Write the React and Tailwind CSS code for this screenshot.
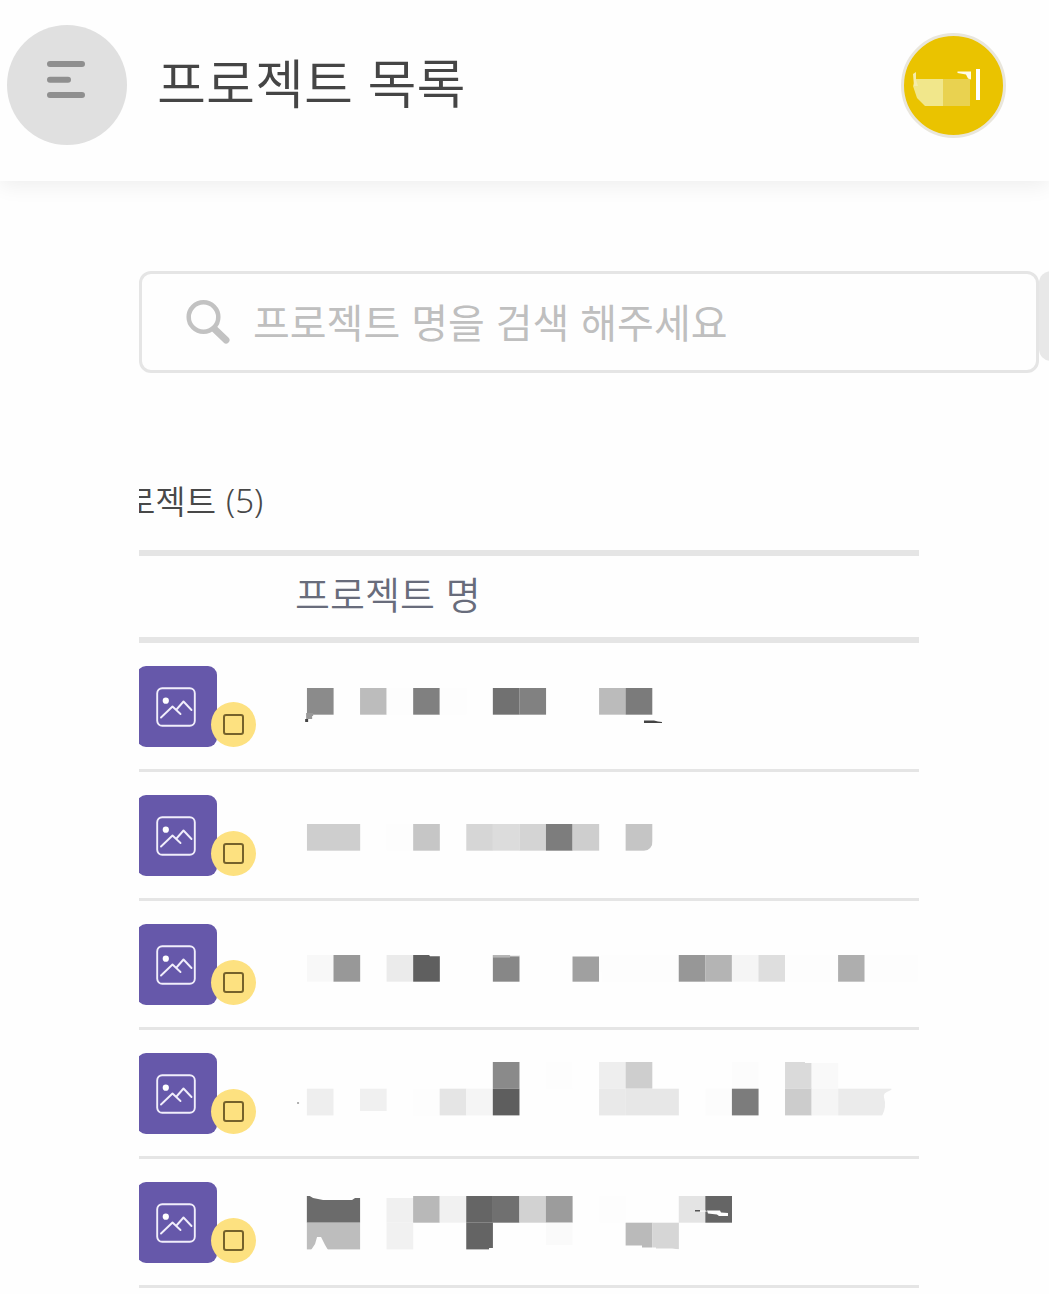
// One mosaic cell is 26.57 units wide; [column, row, colour, columns spanned]
const CELL = 26.57;

const projects = [
    {
        id: 1,
        top: 45,
        rows: 1,
        cells: [
            [0, 0, '#8b8b8b'],
            [2, 0, '#bcbcbc'],
            [3, 0, '#fdfdfd'],
            [4, 0, '#808080'],
            [5, 0, '#fdfdfd'],
            [7, 0, '#717171'],
            [8, 0, '#818181'],
            [11, 0, '#bbbbbb'],
            [12, 0, '#7b7b7b'],
        ],
        details: (
            <>
                <path d="M-1 25h7v3h-1v3h-6z" fill="#989898" />
                <path d="M-2 31h3v3h-3z" fill="#444" />
                <path d="M337 32.4h10l4 1 4 .5v1h-18z" fill="#444" />
            </>
        ),
    },
    {
        id: 2,
        top: 181,
        rows: 1,
        cells: [
            [0, 0, '#cecece', 2],
            [3, 0, '#fdfdfd'],
            [4, 0, '#c6c6c6'],
            [6, 0, '#d6d6d6'],
            [7, 0, '#dcdcdc'],
            [8, 0, '#d4d4d4'],
            [9, 0, '#7d7d7d'],
            [10, 0, '#cecece'],
            [12, 0, '#c5c5c5'],
        ],
        details: <path d="M346 17q-1 9-9 10h9z" fill="#fefefe" />,
    },
    {
        id: 3,
        top: 312,
        rows: 1,
        cells: [
            [0, 0, '#f8f8f8'],
            [1, 0, '#989898'],
            [3, 0, '#ebebeb'],
            [4, 0, '#5f5f5f'],
            [7, 0, '#878787'],
            [10, 0, '#a0a0a0'],
            [11, 0, '#fdfdfd', 3],
            [14, 0, '#979797'],
            [15, 0, '#b4b4b4'],
            [16, 0, '#f5f5f5'],
            [17, 0, '#dedede'],
            [18, 0, '#fdfdfd', 2],
            [20, 0, '#aeaeae'],
            [21, 0, '#fdfdfd', 2],
        ],
        details: (
            <>
                <path d="M122 0h11v1.2h-10z" fill="#fefefe" />
                <path d="M186 0h17v2.6h-17z" fill="#b5b5b5" />
                <path d="M203 0h10v1.4h-10z" fill="#ededed" />
                <path d="M265 0h29v1.6h-29zM293 17h2v10h-2z" fill="#fefefe" />
            </>
        ),
    },
    {
        id: 4,
        top: 419,
        rows: 2,
        cells: [
            [7, 0, '#8a8a8a'],
            [9, 0, '#fdfdfd'],
            [11, 0, '#eeeeee'],
            [12, 0, '#cecece'],
            [16, 0, '#fcfcfc'],
            [18, 0, '#dadada'],
            [19, 0, '#f9f9f9'],
            [0, 1, '#eeeeee'],
            [2, 1, '#f0f0f0'],
            [4, 1, '#fdfdfd'],
            [5, 1, '#e5e5e5'],
            [6, 1, '#f5f5f5'],
            [7, 1, '#5e5e5e'],
            [11, 1, '#e9e9e9'],
            [12, 1, '#e7e7e7', 2],
            [15, 1, '#fcfcfc'],
            [16, 1, '#7c7c7c'],
            [18, 1, '#cccccc'],
            [19, 1, '#f5f5f5'],
            [20, 1, '#ebebeb', 2],
        ],
        details: (
            <>
                <path d="M53 49h27v6H53z" fill="#fefefe" />
                <path d="M-10 40h2v2h-2z" fill="#b0b0b0" />
                <path d="M582 29q-6 2-5 6 3 10-2 19h11V27z" fill="#fefefe" />
                <path d="M498 -1h35v2h-35z" fill="#fefefe" />
            </>
        ),
    },
    {
        id: 5,
        top: 553,
        rows: 2,
        cells: [
            [0, 0, '#6b6b6b', 2],
            [3, 0, '#f0f0f0'],
            [4, 0, '#b8b8b8'],
            [5, 0, '#f1f1f1'],
            [6, 0, '#656565'],
            [7, 0, '#707070'],
            [8, 0, '#d2d2d2'],
            [9, 0, '#9c9c9c'],
            [11, 0, '#fdfdfd'],
            [14, 0, '#e4e4e4'],
            [15, 0, '#656565'],
            [0, 1, '#bdbdbd', 2],
            [3, 1, '#f1f1f1'],
            [6, 1, '#646464'],
            [9, 1, '#fafafa'],
            [12, 1, '#bababa'],
            [13, 1, '#d6d6d6'],
        ],
        details: (
            <>
                <path d="M1 -1l5 3 10 2h29l3-2h6v-4z" fill="#fefefe" />
                <path d="M4 54l4-6 2-7h4l4 8 3 5z" fill="#fefefe" />
                <path d="M78 0h28v2H78zM182 52h5v3h-5z" fill="#fefefe" />
                <path d="M318 49.5h17v2h14v1h16l8 1v2h-55z" fill="#fefefe" />
                <path d="M238 49h31v5h-31z" fill="#fefefe" />
                <path d="M400 14.5h13l1 2 7 .5v3h-9l-2-1.500-9-1z" fill="#fefefe" />
                <path d="M388 14h5v1.5h-5z" fill="#555" />
                <path d="M393 14.5h6l1 1-7 .5z" fill="#f8f8f8" />
            </>
        ),
    },
];

function RedactedName({ project }) {
    return (
        <svg
            className="block shrink-0 overflow-visible"
            width="612"
            height={project.rows * 26.7}
            viewBox={`0 0 612 ${project.rows * 26.7}`}
        >
            {project.cells.map(([col, row, fill, span = 1], i) => (
                <rect
                    key={i}
                    x={col * CELL - 0.2}
                    y={row * 26.7}
                    width={span * CELL + 0.1}
                    height="26.7"
                    fill={fill}
                />
            ))}
            {project.details}
        </svg>
    );
}

function ImageIcon() {
    return (
        <svg
            className="relative -left-px"
            width="40"
            height="40"
            viewBox="0 0 40 40"
            fill="none"
            stroke="#f1eefb"
            strokeWidth="1.9"
        >
            <rect x="1.2" y="1.2" width="37.6" height="37.6" rx="5" />
            <circle cx="9.8" cy="13.7" r="3.1" fill="#fff" stroke="none" />
            <path d="M5 30.5L16.5 19.5l8 7.5M20.5 22.5l7-8 8 8.5" strokeLinecap="round" strokeLinejoin="round" />
        </svg>
    );
}

function Header() {
    return (
        <header className="flex h-[181px] items-start bg-[#fefefe] pl-[7px] pr-[43px] shadow-[0_4px_20px_rgba(0,0,0,0.07)]">
            <button type="button" className="mt-[25px] size-[120px] shrink-0 rounded-full bg-[#e0e0e0]">
                <svg width="120" height="120" viewBox="0 0 120 120" stroke="#8f8f8f" strokeWidth="6" strokeLinecap="round">
                    <path d="M43 39h32M43 54.7h18M43 70h32" />
                </svg>
            </button>
            <h1 className="ml-[30px] mt-[41px] whitespace-nowrap text-[53.3px] font-[350] leading-[80px] text-[#454545] [word-spacing:2.5px]">
                프로젝트 목록
            </h1>
            <div className="ml-auto mt-[33px] size-[105px] rounded-full border-[3px] border-[#e9e6dc] bg-[#eac300]">
                <svg className="block" width="99" height="99" viewBox="904 36 99 99">
                    <path d="M915.5 79H944v27h-19l-8-8-4-12z" fill="#f1e78b" />
                    <path d="M943 79h27v27h-27z" fill="#e9d250" />
                    <path d="M913 74l3-2v8l2 6h-4z" fill="#f5ecab" />
                    <path d="M957.5 71.5h13.5v8l-3-1-2-4-8.5-1.5z" fill="#fffce8" />
                    <path d="M976 69h4v31h-4z" fill="#fff" />
                </svg>
            </div>
        </header>
    );
}

export default function App() {
    return (
        <div className="h-[1294px] w-[1049px] overflow-hidden bg-[#fefefe] font-['Noto_Sans_CJK_KR',sans-serif]">
            <Header />
            <main className="pl-[139px] pt-[90px]">
                <div className="flex items-start">
                    <div className="flex h-[102px] w-[900px] shrink-0 items-center rounded-[12px] border-[3px] border-[#e5e5e5] bg-[#fefefe] pl-[44px]">
                        <svg width="45" height="46" viewBox="0 0 45 46" fill="none" stroke="#c2c2c2">
                            <circle cx="17.5" cy="18" r="14.8" strokeWidth="4.5" />
                            <path d="M29 30.5l11 10.5" strokeWidth="7" strokeLinecap="round" />
                        </svg>
                        <span className="-mt-[2px] ml-[22px] whitespace-nowrap text-[40px] leading-[60px] text-[#bfbfbf] [word-spacing:2px]">
                            프로젝트 명을 검색 해주세요
                        </span>
                    </div>
                    <button type="button" className="h-[90px] w-[90px] shrink-0 rounded-[12px] bg-[#e8e8e8]" />
                </div>

                <section className="mt-[102px] w-[780px] overflow-hidden">
                    <h2 className="-ml-[14px] h-[75px] whitespace-nowrap text-[33px] font-[350] leading-[50px] text-[#484848] [word-spacing:2.5px]">
                        로젝트 <span className="relative -top-px font-['Noto_Sans',sans-serif] font-light">(5)</span>
                    </h2>
                    <div className="flex h-[93px] items-center border-y-[6px] border-[#e5e5e5] pb-[8px] pl-[156px] text-[38px] font-[350] leading-[56px] text-[#686c7b] [word-spacing:2.5px]">
                        프로젝트 명
                    </div>
                    <ul>
                        {projects.map((project, i) => (
                            <li key={project.id} className="flex h-[129px] items-start border-b-[3px] border-[#e5e5e5]">
                                <div className="relative -ml-[2px] mt-[23px] flex h-[81px] w-[80px] shrink-0 items-center justify-center rounded-[9px] bg-[#6658aa]">
                                    <ImageIcon />
                                    <span className="absolute left-[74px] top-[36px] flex size-[45px] items-center justify-center rounded-full bg-[#fde180]">
                                        <span className="size-[21px] rounded-[3px] border-2 border-[#75622b]" />
                                    </span>
                                </div>
                                <div className="ml-[90px]" style={{ marginTop: project.top - i * 129 }}>
                                    <RedactedName project={project} />
                                </div>
                            </li>
                        ))}
                    </ul>
                </section>
            </main>
        </div>
    );
}
